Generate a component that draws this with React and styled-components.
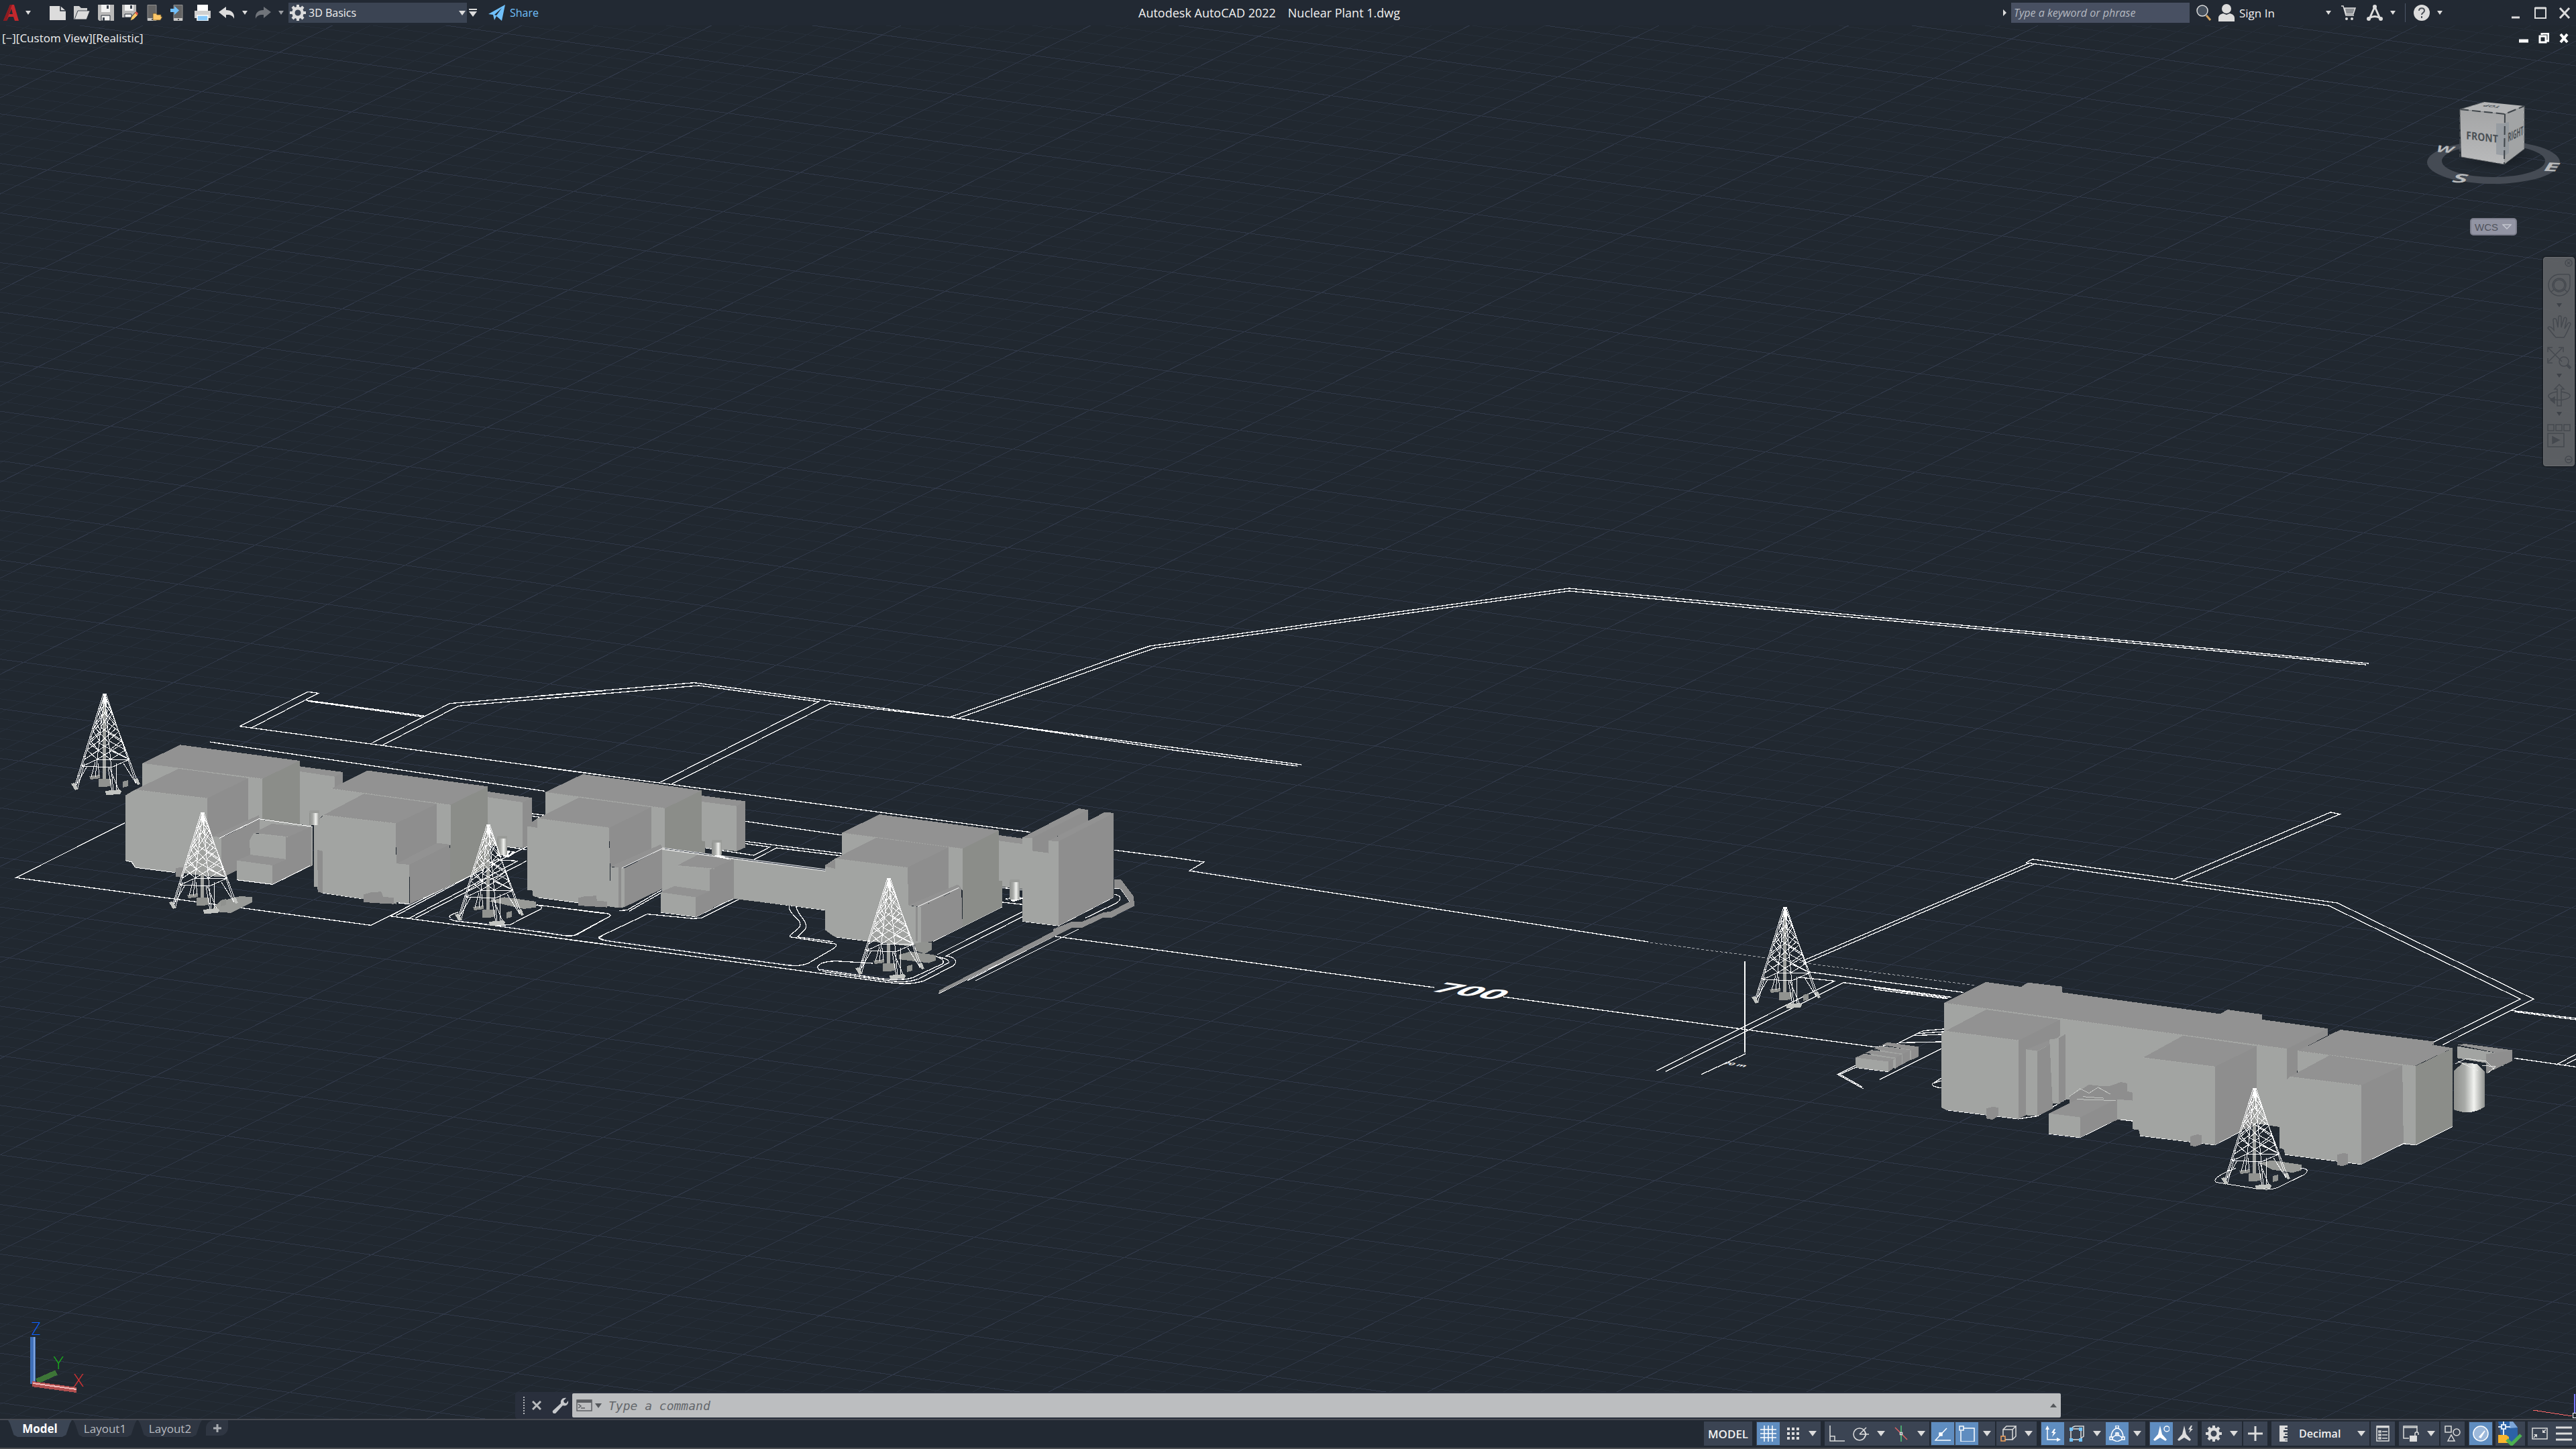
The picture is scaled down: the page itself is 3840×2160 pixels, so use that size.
import React from 'react';
import styled, { createGlobalStyle, css } from 'styled-components';

const GlobalStyle = createGlobalStyle`
  * {
    box-sizing: border-box;
  }

  html,
  body,
  #root {
    height: 100%;
    margin: 0;
  }

  body {
    background: #212830;
    color: #f0f0f0;
    font-family: 'Open Sans', 'Noto Sans', sans-serif;
    font-size: 17px;
    overflow: hidden;
  }

  button,
  input,
  select {
    font: inherit;
    color: inherit;
    margin: 0;
    padding: 0;
    border: 0;
    background: none;
  }
`;

const WindowStyled = styled.div`
  height: 100%;
  display: flex;
  flex-direction: column;
`;

/* ---------- title bar ---------- */

const TitleBarStyled = styled.header`
  height: 38px;
  display: grid;
  grid-template-columns: 1fr auto 1fr;
  align-items: center;
  background: #222933;
`;

const ToolsStyled = styled.div`
  display: flex;
  align-items: center;
  padding-left: 4px;
`;

const ToolButtonStyled = styled.button`
  width: ${({ $width }) => $width || 36}px;
  height: 30px;
  display: flex;
  justify-content: center;
  align-items: center;
`;

const AppButtonStyled = styled.button`
  width: 46px;
  height: 30px;
  margin-right: 18px;
  display: flex;
  align-items: center;
  gap: 8px;
`;

const CaretButtonStyled = styled.button`
  width: 18px;
  height: 30px;
  display: flex;
  justify-content: center;
  align-items: center;
`;

const CaretStyled = styled.span`
  border: ${({ $size }) => $size || 4}px solid transparent;
  border-top: ${({ $size }) => ($size || 4) + 2}px solid ${({ $color }) => $color || '#dcdcdc'};
  border-bottom: 0;
`;

const WorkspaceStyled = styled.label`
  width: 266px;
  height: 30px;
  display: flex;
  align-items: center;
  gap: 4px;
  margin-left: 2px;
  padding: 0 2px;
  background: #3b4453;
`;

const SelectStyled = styled.select`
  flex: 1;
  min-width: 0;
  appearance: none;
  font-size: 16px;
  line-height: 24px;
`;

const ShareStyled = styled.button`
  display: flex;
  align-items: center;
  gap: 6px;
  margin-left: 14px;
  color: #70c0fb;
  font-size: 16px;
`;

const TitleStyled = styled.h1`
  margin: 0 56px 0 0;
  display: flex;
  gap: 18px;
  font-size: 18px;
  font-weight: 400;
  line-height: 36px;
`;

const AccountStyled = styled(ToolsStyled)`
  justify-content: flex-end;
  padding: 0;
`;

const SearchStyled = styled.input`
  width: 266px;
  height: 30px;
  padding: 0 4px;
  background: #485062;
  font-size: 16px;
  font-style: italic;

  &::placeholder {
    color: #b4b8c0;
    opacity: 1;
  }
`;

const SignInStyled = styled.button`
  width: 156px;
  display: flex;
  align-items: center;
  gap: 6px;
`;

const SeparatorStyled = styled.span`
  width: 1px;
  height: 28px;
  margin: 0 6px 0 9px;
  background: #4c5667;
`;

const WindowButtonsStyled = styled.div`
  display: flex;
  margin-left: 86px;
`;

/* ---------- viewport ---------- */

const ViewportStyled = styled.main`
  flex: 1;
  min-height: 0;
  position: relative;
  overflow: hidden;
  border-bottom: 2px solid #474a52;
`;

const CanvasStyled = styled.svg`
  position: absolute;
  inset: 0;
  width: 100%;
  height: 100%;
  shape-rendering: crispEdges;

  path,
  polyline,
  line {
    vector-effect: non-scaling-stroke;
  }
`;

const ViewHeaderStyled = styled.div`
  position: relative;
  height: 38px;
  display: flex;
  justify-content: space-between;
  align-items: center;
  padding: 0 10px 0 3px;
`;

const ViewLabelStyled = styled.button`
  font-size: 17px;
  line-height: 24px;
`;

const ViewButtonsStyled = styled.div`
  display: flex;
  gap: 14px;
`;

const SmallButtonStyled = styled.button`
  width: 16px;
  height: 20px;
`;

const ViewToolsStyled = styled.aside`
  position: absolute;
  top: 102px;
  right: 0;
  width: 240px;
  display: flex;
  flex-direction: column;
`;

const WcsStyled = styled.button`
  align-self: flex-start;
  width: 70px;
  height: 26px;
  margin: 45px 0 0 82px;
  display: flex;
  align-items: center;
  gap: 6px;
  padding-left: 5px;
  border: 2px solid #7c7e8c;
  border-radius: 5px;
  background: #9294a3;
  color: #50535c;
  font: 15px 'Liberation Sans', sans-serif;
`;

const NavBarStyled = styled.nav`
  align-self: flex-end;
  width: 47px;
  height: 312px;
  margin: 32px 2px 0 0;
  display: flex;
  flex-direction: column;
  align-items: center;
  border: 1px solid #6a6d70;
  border-radius: 4px;
  background: rgba(95, 98, 101, 0.94);
  box-shadow: 0 0 2px 1px #15191f;
`;

const NavButtonStyled = styled.button`
  height: ${({ $height }) => $height}px;
  width: 100%;
  display: flex;
  justify-content: ${({ $end }) => ($end ? 'flex-end' : 'center')};
  align-items: center;
`;

const CommandLineStyled = styled.form`
  position: absolute;
  left: 20%;
  right: 20%;
  bottom: 0;
  height: 40px;
  display: flex;
  align-items: center;
  background: #292f3c;
  border-radius: 4px;
`;

const GripStyled = styled.span`
  height: 26px;
  margin-left: 12px;
  border-left: 2px dotted #b4b6ba;
`;

const CommandButtonStyled = styled.button`
  width: 35px;
  height: 36px;
  display: flex;
  justify-content: center;
  align-items: center;
`;

const CommandFieldStyled = styled.label`
  flex: 1;
  height: 36px;
  display: flex;
  align-items: center;
  gap: 4px;
  margin-left: 1px;
  padding: 0 6px;
  border-radius: 2px;
  background: #bcbec0;
`;

const CommandInputStyled = styled.input`
  flex: 1;
  padding-left: 6px;
  color: #55585c;
  font: italic 18px 'DejaVu Sans Mono', monospace;

  &::placeholder {
    color: #64676b;
    opacity: 1;
  }
`;

/* ---------- bottom bar ---------- */

const BottomBarStyled = styled.footer`
  height: 43px;
  display: flex;
  justify-content: space-between;
  align-items: flex-start;
  background: #222933;
  border-bottom: 2px solid #4b4c50;
`;

const TabsStyled = styled.div`
  display: flex;
  gap: 2px;
  padding-left: 12px;
`;

const TabStyled = styled.button`
  height: 25px;
  min-width: 95px;
  background: ${({ $active }) => ($active ? '#3b4554' : '#2f3642')};
  color: ${({ $active }) => ($active ? '#ffffff' : '#b8bbc0')};
  font-size: 17px;
  font-weight: ${({ $active }) => ($active ? 700 : 400)};
  line-height: 24px;
  clip-path: polygon(0 0, 100% 0, 97% 20%, 91% 88%, 85% 100%, 15% 100%, 9% 88%, 3% 20%);
`;

const AddTabStyled = styled.button`
  width: 33px;
  height: 23px;
  margin-left: 4px;
  border-radius: 12px 0 12px 0;
  background: #2f3642;
  display: flex;
  justify-content: center;
  align-items: center;
`;

const StatusBarStyled = styled.div`
  display: flex;
  gap: 6px;
  padding-top: 2px;
`;

const StatusPairStyled = styled.div`
  display: flex;
  gap: ${({ $gap }) => $gap || 2}px;
`;

const StatusGroupStyled = styled.div`
  height: 36px;
  display: flex;
  align-items: center;
  background: #3b4453;
`;

const StatusButtonStyled = styled.button`
  width: ${({ $width }) => $width || 36}px;
  height: 36px;
  display: flex;
  justify-content: center;
  align-items: center;
  ${({ $active }) =>
    $active &&
    css`
      background: #5f8dc0;
      border: 1px solid #3b4453;
    `}
`;

const ModelButtonStyled = styled(StatusButtonStyled)`
  width: 72px;
  font-size: 17px;
  font-weight: 600;
`;

const UnitsStyled = styled.label`
  width: 146px;
  height: 36px;
  display: flex;
  align-items: center;
  gap: 16px;
  padding: 0 6px 0 12px;
  font-weight: 600;
`;

/* ---------- icons ---------- */

const Icon = ({ children, size = 24, height, box = '0 0 24 24', ...rest }) => (
  <svg
    width={size}
    height={height || size}
    viewBox={box}
    fill="none"
    stroke="#dcdcdc"
    strokeWidth="1.5"
    aria-hidden="true"
    {...rest}
  >
    {children}
  </svg>
);

const Gear = ({ size }) => (
  <Icon size={size} stroke="none" fill="#dcdcdc">
    <path
      fillRule="evenodd"
      d="M10 0h4v3l2 1 2.500-2.500 3 3L19.500 7l1 3H24v4h-3.500l-1 3 2 2.500-3 3L16 20l-2 1v3h-4v-3l-2-1-2.500 2.500-3-3 2-2.500-1-3H0v-4h3.500l1-3-2-2.500 3-3L8 4l2-1zM12 7.500a4.500 4.500 0 1 0 0 9 4.500 4.500 0 0 0 0-9z"
    />
  </Icon>
);

const FloppyShape = () => (
  <>
    <path d="M0 0h24v24H2l-2-2z" fill="#b9b9b9" stroke="none" />
    <path d="M5 0h13v11H5z" fill="#f2f2f2" stroke="none" />
    <path d="M13 1h3v5h-3z" fill="#3c434d" stroke="none" />
    <path d="M5 16h13v8H5z" fill="#f2f2f2" stroke="#2a313b" strokeWidth="1" />
    <path d="M7 19h3v5H7z" fill="#3c434d" stroke="none" />
  </>
);

const PhoneShape = () => (
  <>
    <path d="M5 0.500h13v23H5z" fill="#646464" stroke="#909090" strokeWidth="1" />
    <path d="M5 20h13v4H5z" fill="#c8c8c8" stroke="none" />
    <path d="M11 21h2v2h-2z" fill="#555" stroke="none" />
  </>
);

const quickTools = [
  {
    label: 'New',
    icon: (
      <Icon stroke="none">
        <path d="M0 2h16l8 7v14H0z" fill="#dcdcdc" />
        <path d="M16 2v7h8" stroke="#222933" />
      </Icon>
    )
  },
  {
    label: 'Open',
    icon: (
      <Icon stroke="none">
        <path d="M0 2h8l3 3h9v4H6L1 22H0z" fill="#cfcfcf" />
        <path d="M6 9h18l-5 13H1z" fill="#dcdcdc" stroke="#222933" strokeWidth=".8" />
      </Icon>
    )
  },
  { label: 'Save', icon: <Icon><FloppyShape /></Icon> },
  {
    label: 'Save As',
    icon: (
      <Icon>
        <path d="M0 0h21v19H0z" fill="#b9b9b9" stroke="none" />
        <path d="M4 0h13v9H4z" fill="#f2f2f2" stroke="none" />
        <path d="M12 1h3v5h-3z" fill="#3c434d" stroke="none" />
        <path d="M4 14h10v5H4z" fill="#f2f2f2" stroke="#2a313b" strokeWidth="1" />
        <path d="m12 24 2-6 6-7 4 4-7 7z" fill="#f6c667" stroke="#2a313b" strokeWidth="1" />
        <path d="m19 12 2-2 3 3-1.500 3z" fill="#e25b4a" stroke="none" />
      </Icon>
    )
  },
  {
    label: 'Open from Web and Mobile',
    icon: (
      <Icon>
        <g transform="translate(-3 0)"><PhoneShape /></g>
        <path d="M10 13h5l1 2h6v3h2l-3 5H10z" fill="#fcc768" stroke="#6b5530" strokeWidth=".8" />
      </Icon>
    )
  },
  {
    label: 'Save to Web and Mobile',
    icon: (
      <Icon>
        <PhoneShape />
        <path d="M0 6h6V2l7 6.500L6 15v-4H0z" fill="#70c0fb" stroke="none" />
      </Icon>
    )
  },
  {
    label: 'Plot',
    icon: (
      <Icon stroke="none">
        <path d="M4 0h16v9H4z" fill="#fff" />
        <path d="M0 9h24v11H0z" fill="#cfcfcf" />
        <path d="M4 16h16v8H4z" fill="#86c8fa" stroke="#fff" strokeWidth="1.500" />
      </Icon>
    )
  }
];

const UndoIcon = ({ color, flip }) => (
  <Icon stroke="none">
    <path
      transform={flip ? 'matrix(-1 0 0 1 24 0)' : undefined}
      d="M0 11 11 3v5c8 0 13 4 12 13-2-5-6-6.500-12-6v5z"
      fill={color}
    />
  </Icon>
);

const grey = { fill: '#dcdcdc', stroke: 'none' };
const white = { stroke: '#ffffff' };

const OrthoIcon = () => <Icon><path d="M2 0v23h22M2 16h7v7" /></Icon>;
const PolarIcon = () => <Icon><circle cx="10" cy="13" r="9" /><path d="M10 13h14M10 13 20 3M17 8l3 5-3 5" /></Icon>;
const IsoIcon = () => (
  <Icon>
    <path d="M12 0v24" stroke="#52c878" />
    <path d="M3 3l18 18" stroke="#e06464" />
    <path d="M10.500 10.500h3v3h-3z" fill="#3b4453" />
  </Icon>
);
const BoxIcon = ({ color }) => (
  <Icon>
    <path d="M4 6h14v15H4zM4 6l5-5h14l-5 5M23 1v15l-5 5" />
    <path d="M1 16h6v7H1z" fill="#3b4453" stroke={color} />
  </Icon>
);
const AnnoShape = ({ color = '#dcdcdc' }) => (
  <path d="M10 0l3 13 7 8-2 2-8-5-8 5-2-2 7-8z" fill={color} stroke="none" />
);

const StatusCaret = () => (
  <StatusButtonStyled $width={24} aria-label="Options">
    <CaretStyled $size={6} />
  </StatusButtonStyled>
);

const StatusItem = ({ label, active, width, children }) => (
  <StatusButtonStyled $active={active} $width={width} aria-label={label} aria-pressed={!!active}>
    {children}
  </StatusButtonStyled>
);

/* ---------- model space drawing ---------- */

const GRID_LEFT = -40;
const GRID_RIGHT = 3880;

const buildGrid = () => {
  const major = [];
  const minor = [];

  for (let k = -50; k < 145; k++) {
    const y = 95.8 + k * 14.78;
    const d = `M${GRID_LEFT} ${(y + GRID_LEFT * 0.1353).toFixed(1)}L${GRID_RIGHT} ${(y + GRID_RIGHT * 0.1353).toFixed(1)}`;
    (k % 5 === 0 ? major : minor).push(d);
  }

  for (let k = -10; k < 138; k++) {
    const x = 495.5 + k * 56.5;
    const d = `M${x.toFixed(1)} 38L${(x - 2090 / 0.507).toFixed(1)} 2128`;
    (k % 5 === 0 ? major : minor).push(d);
  }

  return { major: major.join(''), minor: minor.join('') };
};

const grid = buildGrid();

const TOP = '#929292';
const FRONT = '#a2a4a2';
const SIDE = '#8e8e8e';
const DARK = '#8b8d89';

const Faces = ({ faces }) => faces.map(([fill, points]) => <polygon key={points} fill={fill} points={points} />);

const westFaces = [
  [TOP, '778,487 891,513 869,533 778,510'],
  [FRONT, '778,510 869,533 869,585 945,610 840,705 815,740 806,757 778,745'],
  [SIDE, '869,533 891,513 891,560 869,580'],
  [TOP, '370,473 468,391 778,462 681,543'],
  [FRONT, '370,473 681,543 681,760 370,700'],
  [DARK, '681,543 778,462 778,748 681,725'],
  [TOP, '350,592 465,497 645,540 538,630'],
  [SIDE, '325,617 350,592 350,610 325,625'],
  [FRONT, '325,620 350,592 538,630 580,800 580,982 538,978 350,940 340,915 325,908'],
  [SIDE, '538,630 645,540 645,735 560,800 538,812'],
  [FRONT, '645,540 681,543 681,722 645,735'],
  [FRONT, '672,724 812,757 812,930 748,980 672,900'],
  [TOP, '555,797 672,706 675,724 570,808'],
  [FRONT, '553,800 578,806 578,982 553,978'],
  [SIDE, '575,806 674,724 674,770 650,820 650,882 615,908 615,952 580,982 575,980'],
  [TOP, '658,785 705,744 808,760 752,803'],
  [SIDE, '752,800 808,757 808,930 752,980 740,980 740,803'],
  [FRONT, '648,820 658,787 742,803 742,905 650,883'],
  [TOP, '615,908 650,882 745,903 708,930'],
  [FRONT, '615,908 708,930 708,1015 615,995'],
  [SIDE, '708,930 745,903 752,980 708,1015'],
  [TOP, '1267,600 1382,628 1357,648 1267,625'],
  [FRONT, '1267,625 1357,648 1357,852 1267,840'],
  [SIDE, '1357,648 1382,628 1382,745 1370,750 1370,845 1357,852'],
  [TOP, '860,587 955,506 1267,577 1170,660'],
  [FRONT, '860,587 1170,660 1170,840 1000,840'],
  [DARK, '1169,660 1267,577 1267,935 1169,1020'],
  [TOP, '840,705 945,610 1135,655 1028,743'],
  [SIDE, '815,740 840,708 840,750 815,755'],
  [FRONT, '815,750 840,705 1028,743 1030,1103 838,1053 826,1050 824,1025 815,1025'],
  [SIDE, '824,860 838,866 838,1053 826,1050'],
  [SIDE, '1027,743 1135,655 1135,830 1030,922'],
  [FRONT, '1135,655 1170,660 1170,838 1135,830'],
  [TOP, '1030,922 1135,830 1168,837 1063,927'],
  [FRONT, '1030,922 1063,927 1063,1102 1030,1095'],
  [SIDE, '1063,927 1168,837 1170,1020 1065,1103'],
  [SIDE, '945,1060 965,1050 990,1048 995,1070 1022,1075 1022,1103 990,1100 945,1095'],
  [SIDE, '457,942 475,938 475,985 457,980']
];

const centerFaces = [
  [TOP, '410,618 519,643 497,665 410,645'],
  [FRONT, '410,645 497,665 497,867 410,850'],
  [SIDE, '497,665 519,643 519,850 497,867'],
  [TOP, '21,603 115,522 410,595 319,675'],
  [FRONT, '21,603 319,675 319,870 21,760'],
  [DARK, '319,675 410,595 410,820 418,822 418,875 319,852'],
  [TOP, '2,720 105,627 285,670 180,762'],
  [FRONT, '-23,750 2,720 180,762 184,1115 2,1073 -9,1068 -11,1042 -23,1040'],
  [SIDE, '-23,748 2,722 2,762 -23,755'],
  [SIDE, '180,762 285,670 285,860 183,940'],
  [FRONT, '285,670 319,675 319,850 285,860'],
  [FRONT, '312,855 718,955 718,1130 480,1077 312,1060'],
  [TOP, '183,935 308,837 314,853 212,942'],
  [FRONT, '183,937 218,943 218,1117 203,1120 183,1115'],
  [SIDE, '204,940 210,940 210,1120 204,1120'],
  [SIDE, '218,943 312,855 312,1035 218,1117'],
  [TOP, '350,930 400,883 490,905 442,945'],
  [FRONT, '312,935 352,935 430,950 430,1045 312,1025'],
  [SIDE, '430,950 490,903 490,1078 430,1125'],
  [TOP, '308,1050 342,1023 430,1045 396,1073'],
  [FRONT, '308,1050 396,1073 396,1160 308,1140'],
  [SIDE, '396,1073 430,1045 440,1122 396,1160'],
  [SIDE, '103,1075 122,1068 148,1066 150,1088 175,1092 175,1118 103,1110'],
  [TOP, '1150,795 1210,810 1210,835 1150,820'],
  [FRONT, '1150,820 1210,835 1210,1035 1150,1025'],
  [TOP, '759,785 852,702 1150,773 1059,856'],
  [FRONT, '759,785 1059,856 1059,1040 759,930'],
  [DARK, '1059,856 1150,773 1150,1000 1158,1000 1158,1115 1059,1205'],
  [TOP, '742,900 845,806 1025,848 922,940'],
  [FRONT, '718,930 742,900 922,940 930,1292 830,1270 742,1250 733,1240 718,1220'],
  [SIDE, '718,928 742,905 742,945 718,935'],
  [SIDE, '922,940 1025,848 1025,1040 925,1110'],
  [FRONT, '1025,848 1059,856 1059,1025 1025,1040'],
  [TOP, '925,1108 1048,1015 1055,1030 955,1117'],
  [FRONT, '925,1110 955,1117 955,1280 928,1290'],
  [SIDE, '943,1115 947,1115 947,1270 943,1270'],
  [SIDE, '955,1117 1056,1030 1059,1205 985,1270 955,1280'],
  [FRONT, '1208,805 1232,805 1298,820 1298,1200 1208,1180'],
  [TOP, '1208,805 1348,675 1371,682 1232,808'],
  [SIDE, '1232,806 1371,682 1371,730 1273,820 1273,875 1232,865'],
  [TOP, '1273,820 1413,692 1435,696 1298,822'],
  [SIDE, '1298,822 1435,696 1435,1072 1298,1200'],
  [SIDE, '1000,1490 1285,1225 1285,1215 1330,1182 1355,1183 1410,1140 1426,1137 1475,1092 1452,1034 1437,1032 1437,992 1453,993 1485,1070 1486,1112 1428,1165 1410,1163 1355,1210 1330,1210 1000,1503']
];

const eastFaces = [
  [TOP, '640,738 653,720 710,735 710,765 640,755'],
  [TOP, '973,840 986,822 1044,840 1044,870'],
  [TOP, '1370,955 1383,951 1462,975 1447,990'],
  [FRONT, '1370,960 1447,990 1447,1035 1370,1005'],
  [SIDE, '1418,990 1462,975 1462,1015 1418,1062'],
  [TOP, '513,797 583,718 1153,893 1085,970'],
  [FRONT, '513,797 1085,970 1090,1270 1030,1250 850,1190 715,1160 700,1175 513,1190'],
  [SIDE, '1085,970 1153,893 1153,920 1110,970 1100,1080 1085,1095'],
  [FRONT, '508,910 513,905 637,938 637,1234 596,1222 516,1200 508,1190'],
  [TOP, '515,903 583,822 707,860 637,938'],
  [SIDE, '637,938 707,860 707,920 690,950 650,980 650,1220 637,1234'],
  [TOP, '650,972 686,940 694,950 668,978'],
  [FRONT, '650,972 669,978 669,1223 650,1220'],
  [SIDE, '669,978 694,950 694,1195 669,1223'],
  [FRONT, '689,935 704,930 704,1178 694,1175'],
  [SIDE, '704,930 716,914 716,1160 704,1178'],
  [SIDE, '583,1195 595,1188 604,1192 604,1222 594,1237 583,1232'],
  [SIDE, '722,1150 755,1105 775,1110 790,1110 808,1095 819,1100 819,1130 828,1135 828,1240 805,1235 768,1270 722,1180'],
  [FRONT, '802,1160 828,1165 828,1240 802,1235'],
  [TOP, '688,1213 735,1160 800,1160 740,1228'],
  [FRONT, '688,1213 740,1228 740,1304 688,1290'],
  [SIDE, '740,1228 802,1160 802,1235 740,1304'],
  [FRONT, '828,1025 845,1005 965,1037 965,1332 840,1297 838,1276 828,1273'],
  [TOP, '845,1003 912,920 1035,960 965,1037'],
  [SIDE, '965,1037 1035,960 1035,1248 965,1332'],
  [FRONT, '1035,960 1085,970 1085,1265 1035,1250'],
  [SIDE, '924,1300 936,1292 943,1296 943,1330 932,1338 924,1335'],
  [TOP, '1103,978 1175,898 1362,967 1298,1035'],
  [TOP, '1155,918 1175,898 1330,942 1330,955'],
  [FRONT, '1103,978 1300,1035 1300,1332 1270,1322 1103,1200'],
  [DARK, '1300,1035 1362,967 1362,1262 1300,1332'],
  [TOP, '1090,1075 1157,994 1278,1033 1209,1108'],
  [FRONT, '1073,1115 1090,1075 1209,1108 1209,1405 1082,1368 1080,1348 1073,1345'],
  [SIDE, '1209,1108 1278,1033 1280,1325 1209,1405'],
  [SIDE, '1169,1370 1180,1362 1187,1366 1187,1405 1178,1412 1169,1408'],
  [TOP, '410,955 418,945 470,962 458,975'],
  [SIDE, '458,975 470,962 470,1000 458,1012'],
  [FRONT, '405,958 458,973 458,1012 405,990'],
  [TOP, '396,970 405,960 458,975 444,990'],
  [SIDE, '444,990 456,975 456,1012 444,1028'],
  [FRONT, '391,974 444,988 444,1030 391,1000'],
  [TOP, '382,985 391,975 444,992 432,1004'],
  [SIDE, '432,1004 442,992 442,1030 432,1042'],
  [FRONT, '378,988 432,1003 432,1044 378,1020'],
  [TOP, '365,1003 378,990 432,1008 420,1018'],
  [SIDE, '420,1018 428,1006 428,1044 420,1056'],
  [FRONT, '365,1003 420,1018 420,1056 365,1040']
];

const westLines = [
  'M622 308 800 154 827 160 653 315M622 308 1568 527M793 191 1104 262M800 196 1100 266',
  'M963 386 1168 206 1568 149M992 394 1191 217 1568 162',
  'M545 378 1415 598M1382 699 1415 706M1382 710 1410 717M785 720 805 722M785 742 805 745',
  'M325 740 41 985 963 1198 1370 845M1013 1157 1290 905M1028 1155 1300 905M1062 1167 1345 910M1078 1167 1368 910',
  'M1310 845 1368 860M1290 905 1340 910',
  'M1013 1157 1568 1282M1170 1165C1160 1155 1180 1145 1190 1140M1168 1170 1180 1178 1290 1200 1325 1195 1405 1125C1410 1112 1400 1108 1390 1108M1400 1108 1568 1145',
  'M1230 1186 1470 1245 1492 1243 1568 1172M1568 1240 1556 1255 1568 1264',
  'M615 995 708 1015 805 932M838 1053 945 1080M1035 1098 1065 1103'
];

const centerLines = [
  'M0 173 392 113 1568 400M0 188 403 126 702 198 308 558M1568 410 1048 272 730 207 335 567',
  'M1028 267 1440 0M1048 272 1470 0M0 488 1228 782M519 733 760 795M1437 862 1568 892',
  'M519 823 760 877M519 833 580 848 540 885 420 852M760 888 597 852 540 904M1290 1248 1568 1314',
  'M0 1107 175 1145C185 1150 185 1155 180 1160L100 1240C90 1248 75 1246 65 1243L0 1225',
  'M0 1243 830 1443C900 1462 935 1465 965 1445L1035 1380C1050 1360 1040 1340 1018 1335L1208 1160M995 1330 1208 1138',
  'M390 1168 275 1148 155 1250C152 1262 170 1266 185 1270L610 1373C640 1382 660 1380 675 1368L740 1300C750 1285 745 1280 730 1278L630 1250C625 1240 655 1215 655 1200C660 1170 625 1150 628 1110',
  'M738 1272 648 1250 668 1215C678 1180 645 1150 645 1110M390 1168 410 1165 505 1080 718 1130',
  'M705 1400C690 1385 700 1360 745 1358L835 1368M700 1395 860 1437C900 1445 920 1442 935 1432L1010 1370C1015 1352 1005 1345 990 1335M710 1405 870 1445C910 1455 930 1450 950 1438L1025 1365C1025 1350 1012 1345 1000 1340',
  'M205 1133 225 1130 318 1033M230 1135 322 1040M2 1073 103 1097M308 1140 396 1160 490 1078M742 1250 830 1270',
  'M1000 1503 1330 1208M1090 1447 1348 1215M1070 1447 1325 1210M1437 1060C1455 1065 1455 1085 1440 1100L1365 1165M1437 1032 1452 1034 1475 1092M1208 1180 1298 1200 1435 1072M1158 1030 1208 1040M1158 1095 1208 1105M985 1270 1158 1115'
];

const eastLines = [
  'M650 268 660 255 897 330 1158 78 1174 85 912 337 1170 420 1497 782 1345 955M650 268 1155 430 1475 782 1330 945M655 270 275 640M665 272 278 650',
  'M288 680 545 757M270 700 330 714 33 1052M345 720 48 1055M345 720 525 775M395 738 520 778M395 745 518 781',
  'M182 988 108 1066M513 895 478 902 437 947 513 943M513 905 470 912M513 915 460 920M508 970 405 1086M365 1033 335 1066 378 1120M369 1036 339 1066 376 1113M437 950 400 963',
  'M508 1090 494 1100C490 1110 500 1115 508 1117M508 1080 496 1098',
  'M1460 825 1568 855M1465 830 1568 860M1465 1005 1568 1038M1535 1030 1568 990M1548 1032 1568 1008',
  'M516 1200 637 1234 669 1223 716 1160M688 1290 740 1304 802 1235 828 1242M840 1297 965 1332 1005 1285M1082 1368 1209 1405 1280 1327 1300 1332 1362 1262M365 1040 420 1056M1038 1250 1072 1262',
  'M720 1133 720 1160M730 1130 745 1137 753 1130 753 1102'
];

const pageLines = [
  'M1663 980 1714 963 2339 877 3531 989M1681 980 1722 966 2339 881 3527 991',
  'M1740 1113 1940 1140M1740 1117 1934 1142',
  'M1740 1277 1795 1285 1773 1298 2303 1380 2457 1404M1740 1418 2138 1472M2241 1486 2797 1561M2601 1433V1569'
];

// feet of the left, front, right and back legs, seen from the apex
const LEGS = [
  [-44, 142],
  [13, 146],
  [50, 134],
  [-14, 124]
];

const NARROW_LEVELS = [8, 18, 30, 43, 56, 70, 84, 98];
const WIDE_LEVELS = [4, 26, 50, 74, 98];

const legPoint = (leg, level) => {
  const t = level / LEGS[leg][1];
  return `${Math.round(LEGS[leg][0] * t)} ${level}`;
};

const braces = (a, b, levels) =>
  levels
    .slice(1)
    .map((level, n) => `M${legPoint(a, levels[n])}L${legPoint(b, level)}M${legPoint(b, levels[n])}L${legPoint(a, level)}`)
    .join('');

const towerPath = [
  LEGS.map(([x, y]) => `M0 0L${x} ${y}`).join(''),
  'M-2 0-46 142M2 0 46 132',
  braces(3, 0, NARROW_LEVELS),
  braces(1, 2, NARROW_LEVELS),
  braces(0, 1, WIDE_LEVELS),
  braces(3, 2, WIDE_LEVELS),
  `M${legPoint(0, 108)}L${legPoint(3, 98)}L${legPoint(2, 98)}M${legPoint(0, 108)}L${legPoint(1, 110)}L${legPoint(2, 98)}`
].join('');

const Tower = ({ x, y }) => (
  <g transform={`translate(${x} ${y})`}>
    <path d="M-1 12V138" stroke="#a0a29f" strokeWidth="5" fill="none" />
    <path d="M-9 127h19v10l-8 2h-11zM27 131l8-2v9l-8 2zM-23 123l16-2v5l-14 2z" fill="#90928f" />
    <path d="M-2 0h4v12h-4z" fill="#ffffff" />
    <path d={towerPath} stroke="#ffffff" fill="none" />
    <path
      d="M-30 104-40 140M-26 108-42 136M5 110 11 146M7 110 22 146M18 104 17 146M28 104 47 134M-14 102-20 124M-10 104-8 122"
      stroke="#ffffff"
      fill="none"
    />
    <path d="M-50 134l5-1 6 9-5 2zM1 145l21-2 3 3-2 4-21 1zM44 127l5-1 4 9-4 1z" fill="#c2c4c1" />
  </g>
);

const towers = [
  [156, 1034],
  [302, 1211],
  [728, 1229],
  [1325, 1309],
  [2661, 1352],
  [3361, 1622]
];

const Tank = ({ x, y, width, height }) => (
  <g>
    <rect x={x} y={y} width={width} height={height} fill="url(#tank)" rx="2" />
    <rect x={x} y={y} width={width} height="4" fill="#999b98" rx="2" />
  </g>
);

const LineSet = ({ paths }) => <path d={paths.join('')} stroke="#ffffff" strokeWidth="1.3" fill="none" />;

const Drawing = () => (
  <CanvasStyled viewBox="0 38 3840 2077" preserveAspectRatio="xMinYMin slice" role="img" aria-label="Model space">
    <defs>
      <linearGradient id="tank">
        <stop offset="0" stopColor="#8e908d" />
        <stop offset=".35" stopColor="#a8aaa7" />
        <stop offset=".65" stopColor="#f2f3f0" />
        <stop offset="1" stopColor="#8e908d" />
      </linearGradient>
    </defs>
    <path d={grid.minor} stroke="#262e39" />
    <path d={grid.major} stroke="#303848" />

    <LineSet paths={pageLines} />
    <path d="M2460 1405 2944 1469" stroke="#a8aaad" strokeDasharray="4 3" />

    <g transform="translate(0 980) scale(.574 .3333)">
      <LineSet paths={westLines} />
      <Faces faces={westFaces} />
      <path d="M570 808 672 722 812 757M615 995 708 1015 805 932" stroke="#fff" fill="none" />
      <path d="M325 908 342 915 352 940 455 962" stroke="#fff" fill="none" />
      <path d="M350 592 538 630M840 705 1028 743M660 790 750 803M860 587 1170 660M465 497 681 543" stroke="#a9aba8" strokeDasharray="2 2" />
      <path d="M572 1090 625 1068 655 1072 655 1095 600 1143 545 1135zM1270 1090 1310 1072 1392 1092 1392 1118 1360 1125z" fill="#989a97" />
    </g>
    <g transform="translate(800 980) scale(.5995 .3333)">
      <LineSet paths={centerLines} />
      <Faces faces={centerFaces} />
      <path d="M312 852 718 948M312 858 718 955M212 942 312 855M947 1115 1050 1030" stroke="#fff" fill="none" />
      <path d="M2 720 180 762M742 900 922 940M21 603 319 675M759 785 1059 856M352 935 442 945" stroke="#a9aba8" strokeDasharray="2 2" fill="none" />
      <path d="M940 1280 960 1272 983 1275 983 1308 965 1325 940 1310zM900 1330 930 1315 993 1332 993 1355 975 1367 900 1350z" fill="#90928f" />
    </g>
    <g transform="translate(2440 1180) scale(.8929 .3954)">
      <LineSet paths={eastLines} />
      <Faces faces={eastFaces} />
      <path d="M513 797 1085 970M515 903 637 938M845 1003 965 1037M1103 978 1300 1035M1090 1075 1209 1108" stroke="#a9aba8" strokeDasharray="2 2" />
      <path d="M722 1150 740 1120 755 1137 770 1115 790 1140M735 1160 800 1165M745 1150 780 1156" stroke="#c4c6c3" fill="none" />
      <path d="M1040 1400 1060 1390 1110 1407 1110 1427 1095 1437 1060 1425z" fill="#989a97" />
      <path d="M1000 1420C975 1440 960 1462 967 1473L1035 1497C1050 1502 1062 1500 1070 1493L1115 1443C1122 1430 1120 1420 1108 1420" stroke="#fff" fill="none" />
    </g>

    <path d="M740 1272l16-4 14 2-12 8-16-2zM1062 1274l16 2 12 6-20-4M1497 1340l18-4 12 3-16 5z" fill="#ffffff" />
    <path d="M744 1274l6 2M762 1270l-4 4M1502 1340l5 2" stroke="#212830" strokeWidth="2" />
    <Tank x={461} y={1208} width={15} height={22} />
    <Tank x={741} y={1246} width={15} height={29} />
    <Tank x={1061} y={1252} width={15} height={23} />
    <Tank x={1505} y={1311} width={15} height={30} />
    <path d="M3658 1596l14-12 20 2 12 12v52q-22 14-46 4z" fill="url(#tank)" />
    <path d="M3660 1586l16-8 30 4 12 12M3664 1582l30 14M3700 1588l20 2-12 10" stroke="#e6e7e5" fill="none" />

    {towers.map(([x, y]) => (
      <Tower key={x} x={x} y={y} />
    ))}

    <g fill="#ffffff" fontFamily="Open Sans, sans-serif" fontWeight="700">
      <text transform="matrix(1 .135 -.6 .3 2130 1477)" fontSize="59">700</text>
      <text transform="matrix(1 .135 -.6 .3 2567 1586)" fontSize="14">70 m</text>
    </g>

    <path d="M49 1993V2063" stroke="#3f6fb8" strokeWidth="8" />
    <path d="M51 1993V2060" stroke="#82a6de" strokeWidth="2" />
    <path d="M55 2059 84 2046" stroke="#3d7537" strokeWidth="8" />
    <path d="M48 2063 114 2072" stroke="#b25050" strokeWidth="8" />
    <path d="M49 2062 114 2071" stroke="#f3b9b9" strokeWidth="2" />
    <g fontFamily="Inter, sans-serif" fontWeight="200" fontSize="25">
      <text x="46" y="1990" fill="#0c62ff">Z</text>
      <text x="79" y="2041" fill="#18b818">Y</text>
      <text x="109" y="2067" fill="#e33434">X</text>
    </g>
    <path d="M3776 2102 3834 2111" stroke="#ff6a6a" />
    <path d="M3838 2078V2106" stroke="#7a78ff" strokeWidth="2" />
    <path d="M3835 2106h6v7h-6z" stroke="#ffffff" fill="none" />
  </CanvasStyled>
);

const ViewCube = () => (
  <svg width="240" height="140" viewBox="0 0 240 140" role="img" aria-label="View cube">
    <defs>
      <linearGradient id="cubeFront" x2="0" y2="1">
        <stop offset="0" stopColor="#a4a5a6" />
        <stop offset="1" stopColor="#b9babb" />
      </linearGradient>
      <radialGradient id="cubeShadow">
        <stop offset="0" stopColor="#161b21" />
        <stop offset="1" stopColor="#161b21" stopOpacity="0" />
      </radialGradient>
    </defs>
    <path d="M18 102a99 32 0 0 0 198 0a99 32 0 0 0-198 0zm22-2a77 24 0 0 1 154 0a77 24 0 0 1-154 0z" fill="#454b54" fillRule="evenodd" />
    <ellipse cx="122" cy="95" rx="60" ry="19" fill="url(#cubeShadow)" />
    <path d="M67 23 103 12 163 18 134 30z" fill="#b4b5b6" />
    <path d="M67 23 134 30 133 105 69 94z" fill="url(#cubeFront)" />
    <path d="M134 30 163 18 163 82 133 105z" fill="#a2a4a5" />
    <path d="M121 44h13v48l-13-2zM134 43l6-1v46l-6 4z" fill="#8f959c" opacity=".7" />
    <path d="M67 23 134 30 163 18M134 30 133 105" stroke="#3e4449" strokeWidth="2" strokeDasharray="13 5" fill="none" />
    <path d="M67 23v71M163 18v64M69 94l64 11M133 105l30-23M67 23l36-11" stroke="#5c6063" strokeDasharray="8 3" fill="none" />
    <g fill="#4b5156" fontFamily="Open Sans, sans-serif" fontWeight="700" textAnchor="middle">
      <text transform="matrix(1 .12 0 1.150 100 70)" fontSize="14">FRONT</text>
      <text transform="matrix(.42 -.2 0 1 150 66)" fontSize="18">RIGHT</text>
      <text transform="matrix(-1 -.1 .6 -.3 117 17)" fontSize="12">TOP</text>
    </g>
    <g fill="#b9bbbd" fontFamily="Open Sans, sans-serif" fontWeight="700" textAnchor="middle" fontSize="22">
      <text transform="matrix(1.200 .1 -.4 .6 42 87)">W</text>
      <text transform="matrix(1.800 .1 -.5 .8 64 132)">S</text>
      <text transform="matrix(1.800 .1 -.5 .8 200 115)">E</text>
    </g>
  </svg>
);

const navStroke = { stroke: '#45494f', strokeWidth: 1.5 };

const NavBar = () => (
  <NavBarStyled aria-label="Navigation">
    <NavButtonStyled $height={16} $end aria-label="Close">
      <Icon size={16} box="0 0 16 16" {...navStroke}><circle cx="8" cy="8" r="5" /><path d="m6 6 4 4m0-4-4 4" /></Icon>
    </NavButtonStyled>
    <NavButtonStyled $height={50} aria-label="Steering wheel">
      <Icon size={34} box="0 0 34 34" {...navStroke}>
        <path d="M17 1h13q3 0 3 3v13a16 16 0 1 1-16-16z" />
        <circle cx="17" cy="17" r="10" />
        <circle cx="17" cy="17" r="8" />
        <path d="m5 27 5-4M29 27l-5-4" />
      </Icon>
    </NavButtonStyled>
    <NavButtonStyled $height={10} aria-label="Wheel options"><CaretStyled $color="#3e4248" /></NavButtonStyled>
    <NavButtonStyled $height={56} aria-label="Pan">
      <Icon size={36} box="0 0 36 36" {...navStroke}>
        <path d="M13 33C9 29 6 24 1 19c1-3 4-3 9 3L9 7c0-3 4-3 5 0l2 11 1-15c0-3 4-3 4 0v15l4-13c1-3 4-2 4 1l-3 14 5-8c1-2 4-1 4 1-3 6-6 15-10 20z" />
      </Icon>
    </NavButtonStyled>
    <NavButtonStyled $height={36} aria-label="Zoom extents">
      <Icon size={36} box="0 0 36 36" {...navStroke}>
        <path d="m2 3 20 20M22 3 2 23M1 9V2h7M17 2h7v7M1 18v7h7" />
        <circle cx="25" cy="23" r="7" />
        <path d="m30 28 5 5" strokeWidth="4" />
      </Icon>
    </NavButtonStyled>
    <NavButtonStyled $height={16} aria-label="Zoom options"><CaretStyled $color="#3e4248" /></NavButtonStyled>
    <NavButtonStyled $height={42} aria-label="Orbit">
      <Icon size={34} box="0 0 34 34" {...navStroke}>
        <path d="M14 33V8h-4l7-7 7 7h-4v25z" />
        <path d="M14 12C4 13 0 17 1 19c1 4 12 6 21 5 8-1 12-4 11-7-1-3-6-4-13-5" />
        <path d="m4 24 6-4v9z" fill="#45494f" />
      </Icon>
    </NavButtonStyled>
    <NavButtonStyled $height={14} aria-label="Orbit options"><CaretStyled $color="#3e4248" /></NavButtonStyled>
    <NavButtonStyled $height={52} aria-label="Show motion">
      <Icon size={36} box="0 0 36 36" {...navStroke}>
        <path d="M1 1h9v9H1zM13 1h9v9h-9zM25 1h9v9h-9zM1 14h24v20H1z" />
        <path d="m8 19 10 5-10 5z" fill="#45494f" />
      </Icon>
    </NavButtonStyled>
    <NavButtonStyled $height={18} $end aria-label="Customize">
      <Icon size={16} box="0 0 16 16" {...navStroke}><circle cx="8" cy="8" r="5" /><path d="M5 8h6" /></Icon>
    </NavButtonStyled>
  </NavBarStyled>
);

const TitleBar = () => (
  <TitleBarStyled>
    <ToolsStyled>
      <AppButtonStyled aria-label="Application menu">
        <Icon size={26} box="0 0 26 26" stroke="none">
          <path d="M11 1h6l7 24h-6l-2-6H9l-3 6H1zM13 7l-3 8h5z" fill="#c2282d" fillRule="evenodd" />
          <path d="M11 1h3L6 25H1z" fill="#8c1b20" />
        </Icon>
        <CaretStyled />
      </AppButtonStyled>
      {quickTools.map(({ label, icon }) => (
        <ToolButtonStyled key={label} aria-label={label}>{icon}</ToolButtonStyled>
      ))}
      <ToolButtonStyled aria-label="Undo"><UndoIcon color="#dcdcdc" /></ToolButtonStyled>
      <CaretButtonStyled aria-label="Undo list"><CaretStyled /></CaretButtonStyled>
      <ToolButtonStyled aria-label="Redo"><UndoIcon color="#70747a" flip /></ToolButtonStyled>
      <CaretButtonStyled aria-label="Redo list"><CaretStyled $color="#9a9da2" /></CaretButtonStyled>
      <WorkspaceStyled>
        <Gear size={24} />
        <SelectStyled aria-label="Workspace" defaultValue="3D Basics">
          <option>3D Basics</option>
        </SelectStyled>
        <CaretStyled $size={5} />
      </WorkspaceStyled>
      <CaretButtonStyled aria-label="Customize toolbar">
        <Icon size={14} box="0 0 14 14"><path d="M1 2h12" strokeWidth="2" /><path d="M1 5h12l-6 8z" {...grey} /></Icon>
      </CaretButtonStyled>
      <ShareStyled>
        <Icon size={26} box="0 0 26 26" stroke="none">
          <path d="M0 15 25 1l-5 24-8-7-3 6-2-8zM9 16l11-10-8 11z" fill="#70c0fb" fillRule="evenodd" />
        </Icon>
        Share
      </ShareStyled>
    </ToolsStyled>
    <TitleStyled>
      <span>Autodesk AutoCAD 2022</span>
      <span>Nuclear Plant 1.dwg</span>
    </TitleStyled>
    <AccountStyled>
      <CaretButtonStyled aria-label="Hide search">
        <Icon size={10} box="0 0 10 10"><path d="m2 0 5 5-5 5z" {...grey} /></Icon>
      </CaretButtonStyled>
      <SearchStyled aria-label="Search" placeholder="Type a keyword or phrase" />
      <ToolButtonStyled $width={42} aria-label="Find">
        <Icon>
          <circle cx="10" cy="9" r="8" fill="#46505c" />
          <path d="m16 16 6 7" stroke="#d3a25e" strokeWidth="3" />
        </Icon>
      </ToolButtonStyled>
      <SignInStyled>
        <Icon size={26} box="0 0 26 26" {...grey}>
          <circle cx="13" cy="7" r="7" />
          <path d="M1 26v-5c0-4 3-6 7-7l5 2 5-2c4 1 7 3 7 7v5z" />
        </Icon>
        Sign In
      </SignInStyled>
      <CaretButtonStyled aria-label="Account"><CaretStyled /></CaretButtonStyled>
      <ToolButtonStyled $width={42} aria-label="App store">
        <Icon>
          <path d="M1 2h3l4 14h12" />
          <path d="M6 5h16l-3 9H8z" fill="#8b8e92" />
          <circle cx="9" cy="21" r="2" {...grey} />
          <circle cx="17" cy="21" r="2" {...grey} />
        </Icon>
      </ToolButtonStyled>
      <ToolButtonStyled aria-label="Autodesk App">
        <Icon>
          <path d="M12 3 4 21M12 3l8 18M4 20c5-3 11-3 16 0" strokeWidth="3" />
          <circle cx="12" cy="3" r="3" {...grey} />
          <circle cx="3" cy="21" r="3" {...grey} />
          <circle cx="21" cy="21" r="3" {...grey} />
        </Icon>
      </ToolButtonStyled>
      <CaretButtonStyled aria-label="App options"><CaretStyled /></CaretButtonStyled>
      <SeparatorStyled />
      <ToolButtonStyled aria-label="Help">
        <Icon>
          <circle cx="12" cy="12" r="12" {...grey} />
          <path d="M8 9c0-5 8-5 8 0 0 3-4 3-4 6M12 17v3" stroke="#4a4f57" strokeWidth="2" />
        </Icon>
      </ToolButtonStyled>
      <CaretButtonStyled aria-label="Help options"><CaretStyled /></CaretButtonStyled>
      <WindowButtonsStyled>
        <ToolButtonStyled aria-label="Minimize"><Icon><path d="M6 19h12" strokeWidth="3" /></Icon></ToolButtonStyled>
        <ToolButtonStyled $width={38} aria-label="Maximize"><Icon><path d="M4 5h16v15H4z" strokeWidth="2" /><path d="M4 5h16" strokeWidth="3" /></Icon></ToolButtonStyled>
        <ToolButtonStyled $width={34} aria-label="Close"><Icon><path d="m5 5 14 15M19 5 5 20" strokeWidth="3" /></Icon></ToolButtonStyled>
      </WindowButtonsStyled>
    </AccountStyled>
  </TitleBarStyled>
);

const StatusBar = () => (
  <StatusBarStyled>
    <StatusGroupStyled><ModelButtonStyled>MODEL</ModelButtonStyled></StatusGroupStyled>
    <StatusGroupStyled>
      <StatusItem label="Grid" active>
        <Icon {...white}><path d="M6 0v24M12 0v24M18 0v24M0 6h24M0 12h24M0 18h24" /></Icon>
      </StatusItem>
      <StatusItem label="Snap">
        <Icon><path d="M4 5h18M4 12h18M4 19h18" strokeWidth="4" strokeDasharray="4 3" /></Icon>
      </StatusItem>
      <StatusCaret />
    </StatusGroupStyled>
    <StatusPairStyled>
      <StatusGroupStyled>
        <StatusItem label="Ortho"><OrthoIcon /></StatusItem>
        <StatusItem label="Polar tracking"><PolarIcon /></StatusItem>
        <StatusCaret />
        <StatusItem label="Isometric drafting"><IsoIcon /></StatusItem>
        <StatusCaret />
      </StatusGroupStyled>
      <StatusGroupStyled>
        <StatusItem label="Object snap tracking" active>
          <Icon {...white}><path d="M24 22H1L18 4" /><path d="M7 11h4v4H7z" fill="#fff" /></Icon>
        </StatusItem>
        <StatusItem label="Object snap" active>
          <Icon {...white}><path d="M7 4h16v20H3V8M1 1h6v6H1z" /></Icon>
        </StatusItem>
        <StatusCaret />
      </StatusGroupStyled>
      <StatusGroupStyled>
        <StatusItem label="3D object snap"><BoxIcon color="#f5a35c" /></StatusItem>
        <StatusCaret />
      </StatusGroupStyled>
    </StatusPairStyled>
    <StatusGroupStyled>
      <StatusItem label="Dynamic UCS" active>
        <Icon {...white}>
          <path d="M4 4v17h17" />
          <path d="M1 6l3-6 3 6zM18 18l6 3-6 3zM14 5l-4 6h3l-2 6 6-7h-3l2-5z" fill="#fff" stroke="none" />
        </Icon>
      </StatusItem>
      <StatusItem label="Selection filtering">
        <Icon>
          <path d="M3 5h15v16H3zM5 3l4-2h13v15l-4 3" />
          <path d="M1 3h5v5H1zM15 3h5v5h-5zM1 19h5v5H1zM15 19h5v5h-5z" fill="#6fc3ff" stroke="none" />
        </Icon>
      </StatusItem>
      <StatusCaret />
      <StatusItem label="Gizmo" active>
        <Icon {...white}>
          <path d="M12 4c6 1 9 7 9 14M12 4C6 5 3 11 3 18M12 14v-4M10 14l-6 5M14 14l6 5M5 21l7 3 7-3M10 0h4v4h-4zM10 11h4v4h-4zM1 17h4v4H1zM19 17h4v4h-4z" />
        </Icon>
      </StatusItem>
      <StatusCaret />
    </StatusGroupStyled>
    <StatusGroupStyled>
      <StatusItem label="Annotation visibility" active>
        <Icon><AnnoShape color="#fff" /><circle cx="20" cy="5" r="4" stroke="#fff" /></Icon>
      </StatusItem>
      <StatusItem label="Auto scale">
        <Icon><AnnoShape /><path d="m20 0-4 6h3l-2 5 6-6h-3l2-5z" {...grey} /></Icon>
      </StatusItem>
    </StatusGroupStyled>
    <StatusPairStyled>
      <StatusGroupStyled>
        <StatusItem label="Workspace switching"><Gear size={24} /></StatusItem>
        <StatusCaret />
      </StatusGroupStyled>
      <StatusGroupStyled>
        <StatusItem label="Annotation monitor"><Icon><path d="M12 1v22M1 12h22" strokeWidth="3" /></Icon></StatusItem>
      </StatusGroupStyled>
    </StatusPairStyled>
    <StatusPairStyled>
      <StatusGroupStyled>
        <UnitsStyled>
          <Icon size={13} height={24} box="0 0 13 24">
            <path d="M0 0h12v3H8v2h4v2H6v3h6v2H8v2h4v2H6v3h6v2H8v1h4v2H0z" {...grey} />
          </Icon>
          <SelectStyled aria-label="Units" defaultValue="Decimal">
            <option>Decimal</option>
          </SelectStyled>
          <CaretStyled $size={6} />
        </UnitsStyled>
      </StatusGroupStyled>
      <StatusGroupStyled>
        <StatusItem label="Quick properties">
          <Icon>
            <path d="M3 1h18v22H3z" />
            <path d="M3 2h18" strokeWidth="3" />
            <path d="M6 8h3v2H6zM6 13h3v2H6zM6 18h3v2H6zM11 9h8M11 14h8M11 19h8" />
          </Icon>
        </StatusItem>
      </StatusGroupStyled>
    </StatusPairStyled>
    <StatusPairStyled>
      <StatusGroupStyled>
        <StatusItem label="Lock interface">
          <Icon>
            <path d="M21 10V1H1v18h8M1 3h20" />
            <path d="M10 15h11v9H10z" {...grey} />
            <path d="M18 15v-3c0-3 5-3 5 0v2" />
          </Icon>
        </StatusItem>
        <StatusCaret />
      </StatusGroupStyled>
      <StatusGroupStyled>
        <StatusItem label="Isolate objects">
          <Icon><path d="M1 1h9v9H1zM5 23l5-9 5 9z" /><circle cx="18" cy="10" r="5" /></Icon>
        </StatusItem>
      </StatusGroupStyled>
    </StatusPairStyled>
    <StatusPairStyled $gap={4}>
      <StatusGroupStyled>
        <StatusItem label="Hardware acceleration" active>
          <Icon {...white}><circle cx="12" cy="12" r="11" fill="#9db9db" /><path d="m10 17 8-9-6 10z" fill="#fff" /></Icon>
        </StatusItem>
      </StatusGroupStyled>
      <StatusGroupStyled>
        <StatusItem label="Trusted DWG" width={44}>
          <Icon size={36} box="0 0 36 36" stroke="none">
            <path d="M0 0h22l7 9v20l-12 4-13-12z" fill="#2c62a6" />
            <path d="M17 0h5l7 9-12 1z" fill="#7da6d8" />
            <path d="M8 0v20M0 8h18" stroke="#dfe9f5" strokeWidth="2" />
            <path d="M5 5h6v6H5z" fill="#2c62a6" stroke="#dfe9f5" strokeWidth="2" />
            <path d="M0 20h12l4 3v9H0z" fill="#f8b52c" />
            <path d="m13 27 7 7 14-14" stroke="#4caf50" strokeWidth="5" />
          </Icon>
        </StatusItem>
      </StatusGroupStyled>
      <StatusGroupStyled>
        <StatusItem label="Clean screen">
          <Icon>
            <path d="M1 4h22v16H1z" />
            <path d="M16 6v5h5zM3 13h5v5z" {...grey} />
            <path d="m17 10 4-4M7 14l-4 4" />
          </Icon>
        </StatusItem>
        <StatusItem label="Customization">
          <Icon><path d="M0 3h24M0 12h24M0 21h24" strokeWidth="3" /></Icon>
        </StatusItem>
      </StatusGroupStyled>
    </StatusPairStyled>
  </StatusBarStyled>
);

const CommandLine = () => (
  <CommandLineStyled onSubmit={e => e.preventDefault()}>
    <GripStyled />
    <CommandButtonStyled type="button" aria-label="Close command line">
      <Icon size={14} box="0 0 14 14" stroke="#b9bbbe"><path d="m1 1 12 12M13 1 1 13" strokeWidth="3" /></Icon>
    </CommandButtonStyled>
    <CommandButtonStyled type="button" aria-label="Customize command line">
      <Icon stroke="none">
        <path d="m1 20 12-11c-1-5 3-9 8-8l-4 4 1 3 3 1 3-4c1 5-3 9-8 7L5 24c-3 1-5-2-4-4z" fill="#c6c8cb" />
      </Icon>
    </CommandButtonStyled>
    <CommandFieldStyled>
      <Icon size={24} height={18} box="0 0 24 18" stroke="#5b5e62">
        <path d="M1 1h22v16H1zM3 7l4 3-4 3M7 13h6" />
        <path d="M1 3h22" strokeWidth="4" />
      </Icon>
      <CaretStyled $size={5} $color="#55585c" />
      <CommandInputStyled aria-label="Command" placeholder="Type a command" />
      <Icon size={10} height={8} box="0 0 10 8"><path d="m0 7 5-6 5 6z" fill="#55585c" stroke="none" /></Icon>
    </CommandFieldStyled>
  </CommandLineStyled>
);

class App extends React.Component {
  state = { tab: 'Model' };

  handleTabClick = tab => {
    this.setState({ tab });
  };

  render() {
    const { tab } = this.state;

    return (
      <WindowStyled>
        <GlobalStyle />
        <TitleBar />
        <ViewportStyled>
          <Drawing />
          <ViewHeaderStyled>
            <ViewLabelStyled>[−][Custom View][Realistic]</ViewLabelStyled>
            <ViewButtonsStyled>
              <SmallButtonStyled aria-label="Minimize drawing">
                <Icon size={16} box="0 0 16 16"><path d="M1 12h14" stroke="#fff" strokeWidth="5" /></Icon>
              </SmallButtonStyled>
              <SmallButtonStyled aria-label="Restore drawing">
                <Icon size={16} box="0 0 16 16"><path d="M5 3V1h10v11h-3M2 5h9v9H2z" stroke="#fff" strokeWidth="3" /></Icon>
              </SmallButtonStyled>
              <SmallButtonStyled aria-label="Close drawing">
                <Icon size={16} box="0 0 16 16"><path d="m3 2 10 12M13 2 3 14" stroke="#fff" strokeWidth="4" /></Icon>
              </SmallButtonStyled>
            </ViewButtonsStyled>
          </ViewHeaderStyled>
          <ViewToolsStyled>
            <ViewCube />
            <WcsStyled>
              WCS
              <Icon size={14} height={8} box="0 0 14 8" stroke="#c4c6d0"><path d="M1 1h12L7 7z" /></Icon>
            </WcsStyled>
            <NavBar />
          </ViewToolsStyled>
          <CommandLine />
        </ViewportStyled>
        <BottomBarStyled>
          <TabsStyled>
            {['Model', 'Layout1', 'Layout2'].map(name => (
              <TabStyled key={name} $active={name === tab} onClick={() => this.handleTabClick(name)}>
                {name}
              </TabStyled>
            ))}
            <AddTabStyled aria-label="New layout">
              <Icon size={14} box="0 0 14 14" stroke="#a8abb0"><path d="M7 1v12M1 7h12" strokeWidth="3" /></Icon>
            </AddTabStyled>
          </TabsStyled>
          <StatusBar />
        </BottomBarStyled>
      </WindowStyled>
    );
  }
}

export default App;
